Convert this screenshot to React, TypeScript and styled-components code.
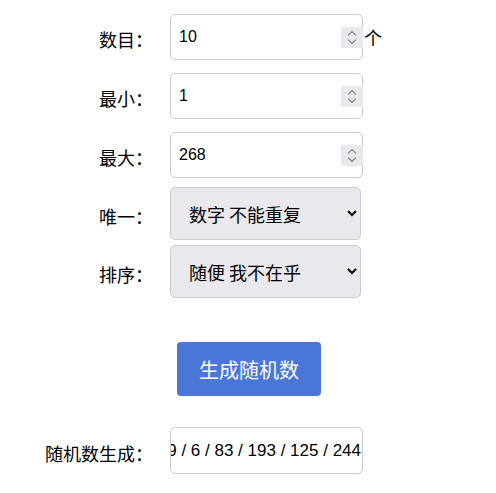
import React, { useState } from 'react'
import styled, { createGlobalStyle } from 'styled-components'

const GlobalStyle = createGlobalStyle`
  body {
    margin: 0;
    background: #fff;
    font-family: "Noto Sans CJK SC", "Noto Sans", sans-serif;
    color: #000;
  }
`

const Page = styled.div`
  width: 496px;
  padding-top: 14px;
  display: flex;
  flex-direction: column;
`

const Row = styled.div<{ $gap?: number }>`
  display: grid;
  grid-template-columns: 148px 193px auto;
  column-gap: 22px;
  align-items: center;
  margin-bottom: ${p => p.$gap ?? 13}px;
`

const Label = styled.label`
  justify-self: end;
  margin-right: -5px;
  padding-top: 4px;
  font-size: 18px;
  line-height: 1;
  white-space: nowrap;
`

const Field = styled.div`
  position: relative;
  width: 193px;
  height: 46px;
`

const NumberInput = styled.input`
  box-sizing: border-box;
  width: 100%;
  height: 100%;
  padding: 0 26px 0 8px;
  border: 1px solid #ccc;
  border-radius: 5px;
  font-family: "Liberation Sans", Arial, sans-serif;
  font-size: 16px;
  color: #000;
  background: #fff;
  outline: none;
  -moz-appearance: textfield;

  &::-webkit-inner-spin-button,
  &::-webkit-outer-spin-button {
    -webkit-appearance: none;
    margin: 0;
  }
`

const Spinner = styled.span`
  position: absolute;
  top: 13px;
  right: 0;
  width: 22px;
  height: 21px;
  background: #e9e9ed;
  display: flex;
  align-items: center;
  justify-content: center;
  pointer-events: none;
`

const Unit = styled.span`
  margin-left: -21px;
  font-size: 18px;
`

const Select = styled.select`
  box-sizing: border-box;
  width: 191px;
  height: 53px;
  padding: 0 0 0 14px;
  border: 1px solid #ccc;
  border-radius: 5px;
  background: #e9e9ed;
  font-family: "Noto Sans CJK SC", "Noto Sans", sans-serif;
  font-size: 18px;
  color: #000;
  outline: none;
`

const ButtonRow = styled.div`
  display: flex;
  justify-content: center;
  margin: 44px 0 31px 2px;
`

const Button = styled.button`
  width: 144px;
  height: 54px;
  border: none;
  border-radius: 4px;
  background: #4a77d7;
  color: #fff;
  font-family: "Noto Sans CJK SC", "Noto Sans", sans-serif;
  font-size: 20px;
  cursor: pointer;
`

const Result = styled.div`
  box-sizing: border-box;
  width: 193px;
  height: 47px;
  border: 1px solid #ccc;
  border-radius: 5px;
  display: flex;
  align-items: center;
  justify-content: flex-end;
  overflow: hidden;
  white-space: nowrap;
  padding-right: 1px;
  font-family: "Liberation Sans", Arial, sans-serif;
  font-size: 17px;
`

function SpinIcon() {
  return (
    <svg width="12" height="17" viewBox="0 0 12 17" fill="none" stroke="#8c8c90" strokeWidth="1.2" strokeLinecap="round" strokeLinejoin="round">
      <path d="M2.5 6 L6 2.5 L9.5 6" />
      <path d="M2.5 11 L6 14.5 L9.5 11" />
    </svg>
  )
}

function NumberField({ value, onChange }: { value: string; onChange: (v: string) => void }) {
  return (
    <Field>
      <NumberInput type="number" value={value} onChange={e => onChange(e.target.value)} />
      <Spinner>
        <SpinIcon />
      </Spinner>
    </Field>
  )
}

export default function App() {
  const [count, setCount] = useState('10')
  const [min, setMin] = useState('1')
  const [max, setMax] = useState('268')
  const [nums] = useState([171, 25, 58, 9, 6, 83, 193, 125, 244])

  return (
    <Page>
      <GlobalStyle />
      <Row>
        <Label>数目：</Label>
        <NumberField value={count} onChange={setCount} />
        <Unit>个</Unit>
      </Row>
      <Row>
        <Label>最小：</Label>
        <NumberField value={min} onChange={setMin} />
      </Row>
      <Row $gap={9}>
        <Label>最大：</Label>
        <NumberField value={max} onChange={setMax} />
      </Row>
      <Row $gap={5}>
        <Label>唯一：</Label>
        <Select defaultValue="unique">
          <option value="unique">数字 不能重复</option>
          <option value="repeat">数字 可以重复</option>
        </Select>
      </Row>
      <Row $gap={0}>
        <Label>排序：</Label>
        <Select defaultValue="none">
          <option value="none">随便 我不在乎</option>
          <option value="asc">从小到大</option>
          <option value="desc">从大到小</option>
        </Select>
      </Row>
      <ButtonRow>
        <Button>生成随机数</Button>
      </ButtonRow>
      <Row $gap={0}>
        <Label>随机数生成：</Label>
        <Result>{nums.join(' / ')}</Result>
      </Row>
    </Page>
  )
}
